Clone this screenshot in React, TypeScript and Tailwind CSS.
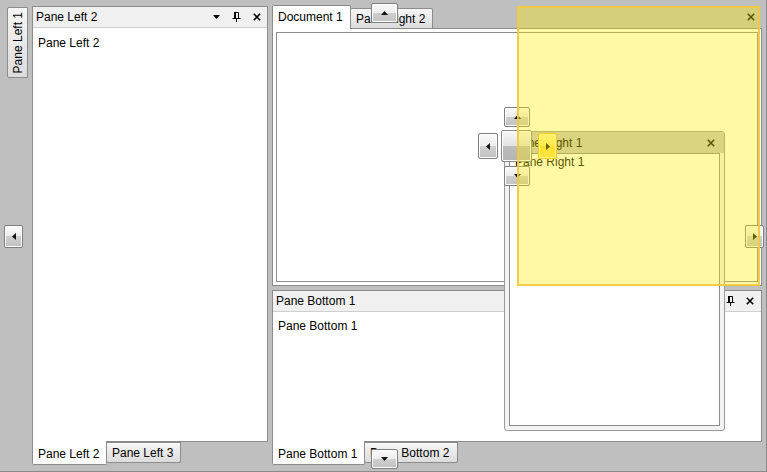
import type { ReactNode } from 'react';

const guideBg =
    'bg-[linear-gradient(to_bottom,#fbfbfb_0%,#ececec_50%,#cfcfcf_50%,#c2c2c2_100%)]';
const tabBg = 'bg-[linear-gradient(to_bottom,#f6f6f6,#dcdcdc)]';

function CloseIcon({ color = '#000' }: { color?: string }) {
    return (
        <svg width="8" height="8" viewBox="0 0 8 8">
            <path d="M0.8 0.8L7.2 7.2M7.2 0.8L0.8 7.2" stroke={color} strokeWidth="1.6" />
        </svg>
    );
}

function PinIcon() {
    return (
        <svg width="9" height="10" viewBox="0 0 9 10">
            <rect x="2" y="0" width="2" height="6" fill="#000" />
            <path d="M3 0.5h3.5v5.5" stroke="#000" strokeWidth="1" fill="none" />
            <path d="M0.5 6.5h8M4.5 6.5v3.5" stroke="#000" strokeWidth="1" />
        </svg>
    );
}

function DropIcon() {
    return (
        <svg width="7" height="4" viewBox="0 0 7 4">
            <polygon points="0,0 7,0 3.5,4" fill="#000" />
        </svg>
    );
}

type Dir = 'up' | 'down' | 'left' | 'right';

function Arrow({ dir }: { dir: Dir }) {
    const pts = {
        up: '0,4 7,4 3.5,0',
        down: '0,0 7,0 3.5,4',
        left: '4,0 4,7 0,3.5',
        right: '0,0 0,7 4,3.5',
    }[dir];
    const horiz = dir === 'left' || dir === 'right';
    return (
        <svg width={horiz ? 4 : 7} height={horiz ? 7 : 4} viewBox={horiz ? '0 0 4 7' : '0 0 7 4'}>
            <polygon points={pts} fill="#111" />
        </svg>
    );
}

function Guide({ dir, className }: { dir: Dir; className: string }) {
    return (
        <div
            className={`absolute flex items-center justify-center rounded-[2px] border border-[#7f7f7f] shadow-[inset_0_0_0_1px_#ffffff] ${guideBg} ${className}`}
        >
            <Arrow dir={dir} />
        </div>
    );
}

function PaneHeader({ title, children }: { title: string; children: ReactNode }) {
    return (
        <div className="h-[21px] shrink-0 bg-[#f0f0f0] border-b border-[#cfcfcf] flex items-center pl-[3px]">
            <span className="flex-1 leading-none">{title}</span>
            {children}
        </div>
    );
}

function BottomTabs({ tabs, widths }: { tabs: string[]; widths: string[] }) {
    return (
        <div className="h-[23px] shrink-0 flex items-start">
            <div
                className={`relative z-10 -mt-px h-[24px] ${widths[0]} bg-white border border-t-0 border-[#8c8c8c] rounded-b-[2px] flex items-center pl-[5px] pt-[2px]`}
            >
                {tabs[0]}
            </div>
            <div
                className={`h-[21px] ${widths[1]} ${tabBg} border border-l-0 border-[#8c8c8c] rounded-b-[2px] flex items-center pl-[5px]`}
            >
                {tabs[1]}
            </div>
        </div>
    );
}

export default function App() {
    return (
        <div className="relative w-[767px] h-[472px] overflow-hidden bg-[#bfbfbf] border-r border-b border-[#8a8a8a] flex text-[12px] text-black font-['Liberation_Sans',Arial,sans-serif]">
            {/* auto-hidden left pane */}
            <div className="w-[32px] shrink-0 pt-[7px] pl-[7px]">
                <div className={`w-[21px] h-[71px] border border-[#8c8c8c] rounded-l-[2px] ${tabBg} flex items-center justify-center`}>
                    <span className="[writing-mode:vertical-rl] rotate-180 whitespace-nowrap leading-none">Pane Left 1</span>
                </div>
            </div>

            {/* left pane group */}
            <div className="w-[236px] shrink-0 pt-[6px] pb-[6px] flex flex-col">
                <div className="flex-1 border border-[#8c8c8c] bg-white flex flex-col">
                    <PaneHeader title="Pane Left 2">
                        <div className="flex items-center gap-[12px] pr-[6px]">
                            <DropIcon />
                            <PinIcon />
                            <CloseIcon />
                        </div>
                    </PaneHeader>
                    <div className="pl-[5px] pt-[6px]">Pane Left 2</div>
                </div>
                <BottomTabs tabs={['Pane Left 2', 'Pane Left 3']} widths={['w-[75px]', 'w-[74px]']} />
            </div>

            {/* documents + bottom */}
            <div className="flex-1 pl-[4px] pr-[4px] pt-[6px] pb-[6px] flex flex-col">
                <div className="h-[280px] shrink-0 flex flex-col">
                    <div className="h-[22px] shrink-0 flex items-end">
                        <div className="relative z-10 -mb-px h-[24px] w-[79px] bg-white border border-b-0 border-[#8c8c8c] rounded-t-[2px] flex items-center pl-[5px] pb-[2px]">
                            Document 1
                        </div>
                        <div className={`h-[20px] w-[82px] ${tabBg} border border-l-0 border-b-0 border-[#8c8c8c] rounded-t-[2px] flex items-center pl-[5px]`}>
                            Pane Right 2
                        </div>
                        <div className="flex-1 h-full flex items-center justify-end pr-[7px]">
                            <CloseIcon />
                        </div>
                    </div>
                    <div className="flex-1 border border-[#8c8c8c] bg-white p-[3px] flex">
                        <div className="flex-1 border border-[#8c8c8c] bg-white" />
                    </div>
                </div>

                <div className="h-[4px] shrink-0" />

                <div className="flex-1 flex flex-col">
                    <div className="flex-1 border border-[#8c8c8c] bg-white flex flex-col">
                        <PaneHeader title="Pane Bottom 1">
                            <div className="flex items-center gap-[11px] pr-[7px]">
                                <PinIcon />
                                <CloseIcon />
                            </div>
                        </PaneHeader>
                        <div className="pl-[5px] pt-[5px]">Pane Bottom 1</div>
                    </div>
                    <BottomTabs tabs={['Pane Bottom 1', 'Pane Bottom 2']} widths={['w-[93px]', 'w-[93px]']} />
                </div>
            </div>

            {/* floating window */}
            <div className="absolute left-[504px] top-[131px] w-[221px] h-[300px] rounded-[3px] border border-[#9a9a9a] bg-[#f3f3f3] flex flex-col">
                <div className="h-[21px] shrink-0 bg-[#c6c6c6] rounded-t-[3px] flex items-center pl-[8px] pr-[9px]">
                    <span className="flex-1">Pane Right 1</span>
                    <CloseIcon />
                </div>
                <div className="flex-1 mx-[4px] mb-[4px] border border-[#8c8c8c] bg-white pl-[5px] pt-[1px] leading-[14px]">
                    Pane Right 1
                </div>
            </div>

            {/* outer dock guides */}
            <Guide dir="up" className="left-[371px] top-[3px] w-[27px] h-[20px]" />
            <Guide dir="down" className="left-[371px] top-[449px] w-[27px] h-[20px]" />
            <Guide dir="left" className="left-[4px] top-[225px] w-[19px] h-[23px]" />
            <Guide dir="right" className="left-[745px] top-[225px] w-[19px] h-[23px]" />

            {/* center compass */}
            <Guide dir="up" className="left-[504px] top-[107px] w-[26px] h-[20px]" />
            <Guide dir="down" className="left-[504px] top-[166px] w-[26px] h-[20px]" />
            <Guide dir="left" className="left-[478px] top-[133px] w-[20px] h-[26px]" />
            <div className="absolute left-[501px] top-[130px] w-[31px] h-[32px] rounded-[2px] border border-[#8a8a8a] shadow-[inset_0_0_0_1px_#ffffff] bg-[linear-gradient(to_bottom,#f7f7f7_0%,#e2e2e2_50%,#bdbdbd_50%,#b4b4b4_100%)]" />
            <div className="absolute left-[538px] top-[133px] w-[19px] h-[26px] rounded-[2px] border border-[#f0b820] shadow-[inset_0_0_0_1px_#fff6b8] bg-[linear-gradient(to_bottom,#fff3a0_0%,#ffe878_50%,#ffd84a_50%,#ffe066_100%)] flex items-center justify-center">
                <Arrow dir="right" />
            </div>

            {/* dock preview overlay */}
            <div className="absolute left-[517px] top-[6px] w-[243px] h-[280px] border-2 border-[#f4c640]/90 bg-[rgba(255,238,0,0.35)]" />
        </div>
    );
}
